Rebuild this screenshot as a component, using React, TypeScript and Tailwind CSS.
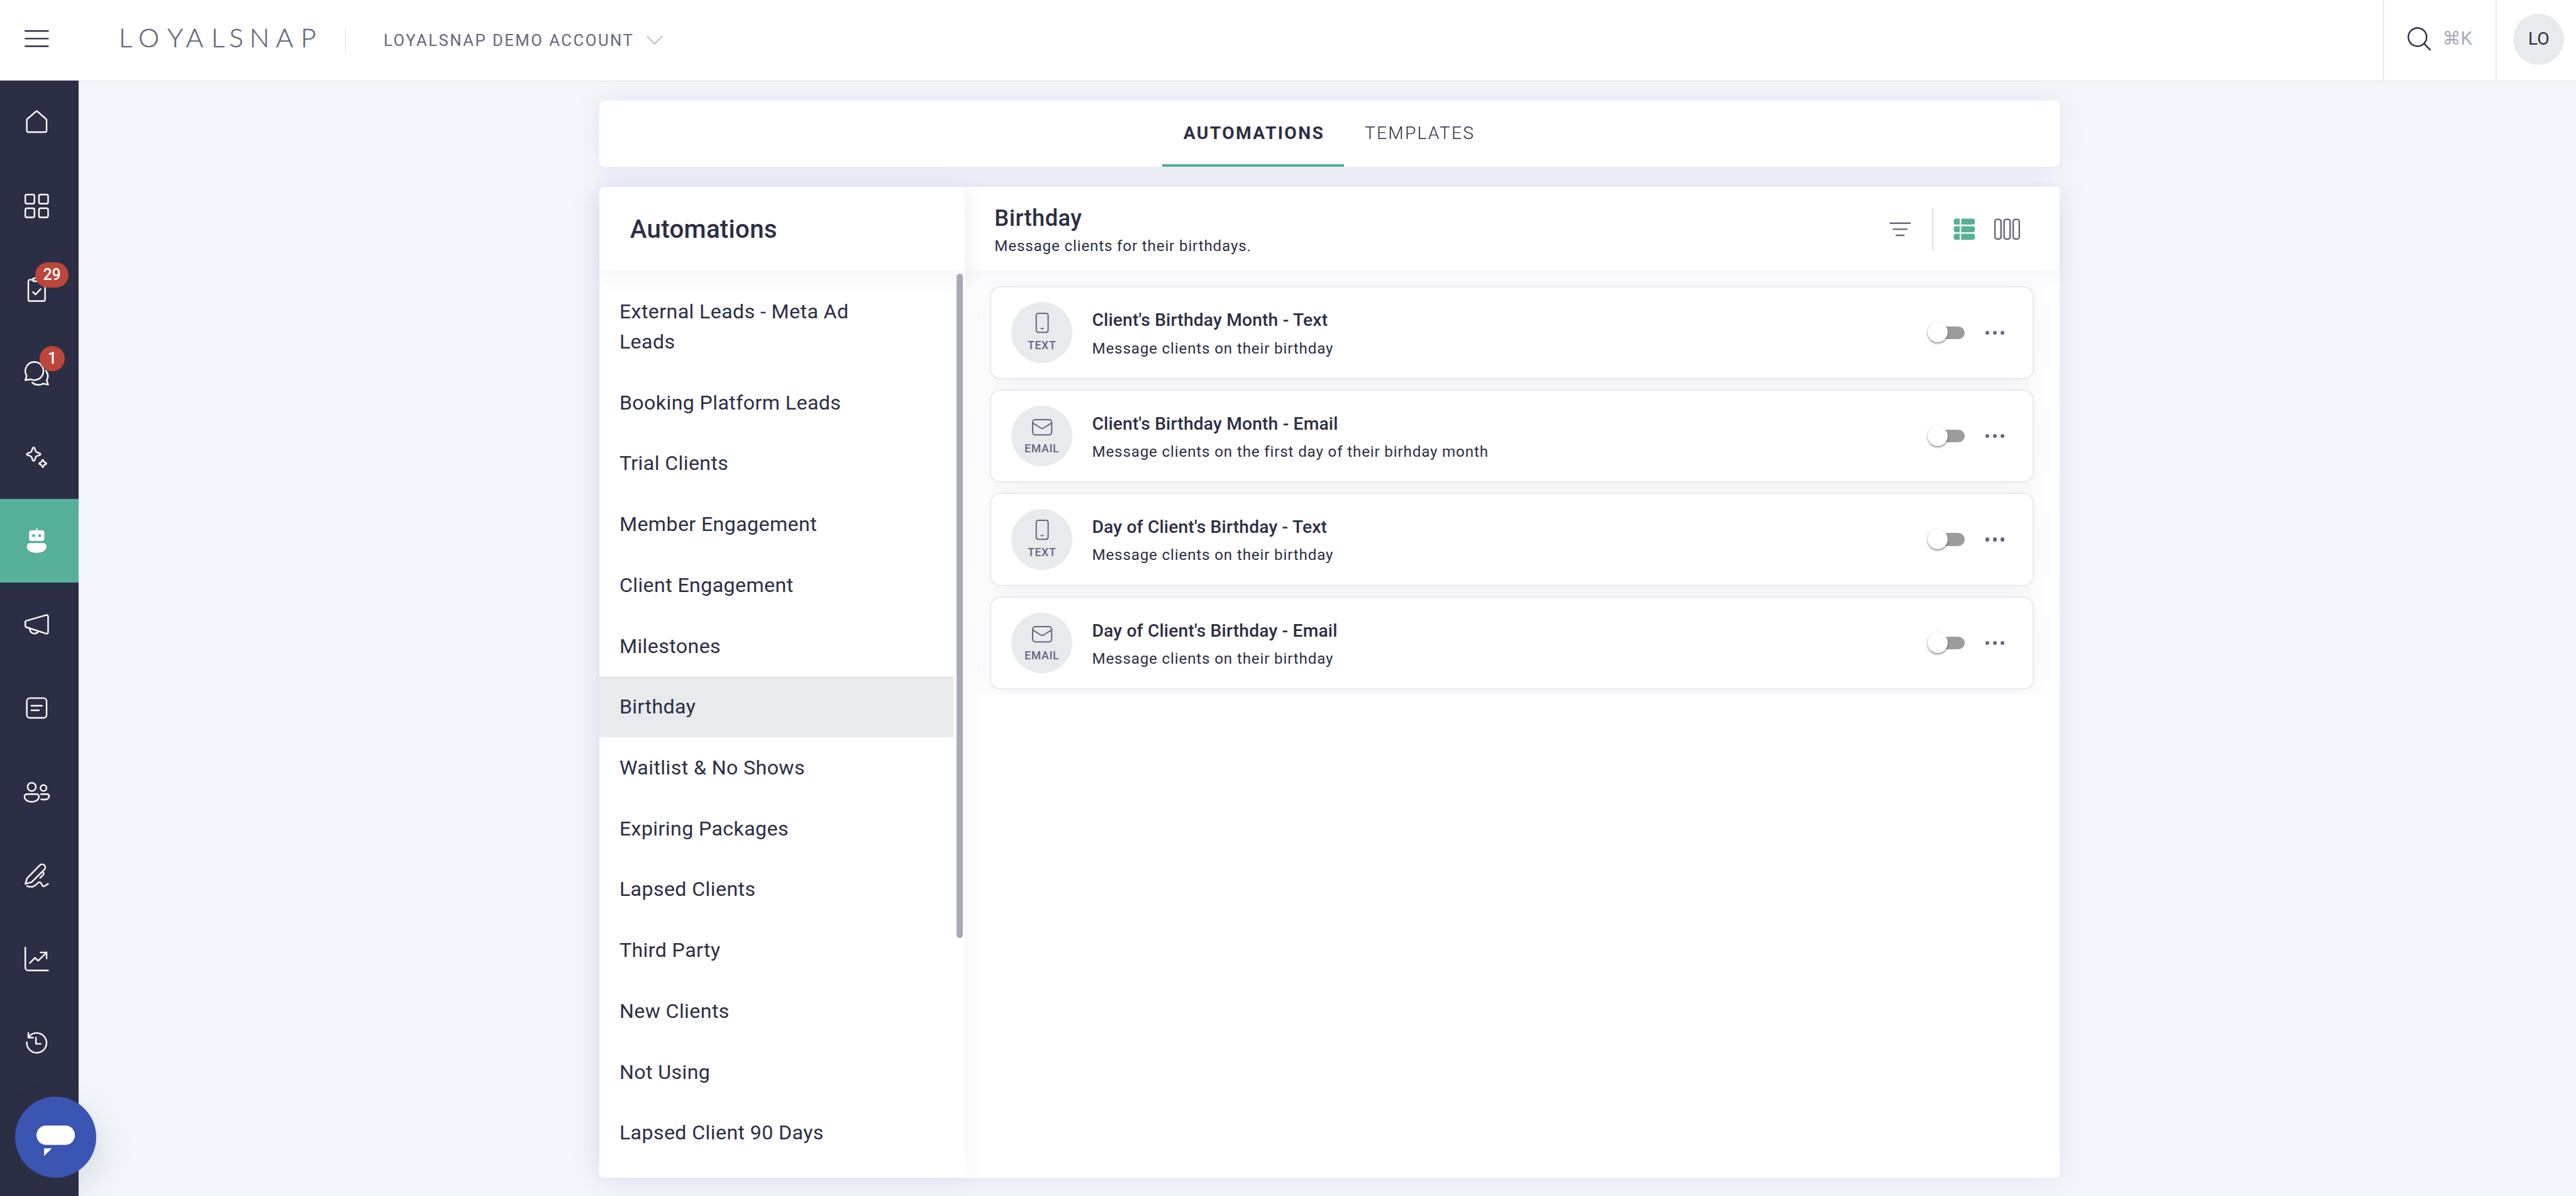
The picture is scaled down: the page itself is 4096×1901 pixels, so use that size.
import type { ReactNode } from "react";

type Channel = "text" | "email";

type NavItem = {
  id: string;
  icon: ReactNode;
  badge?: string;
  active?: boolean;
};

const categories = [
  "External Leads - Meta Ad Leads",
  "Booking Platform Leads",
  "Trial Clients",
  "Member Engagement",
  "Client Engagement",
  "Milestones",
  "Birthday",
  "Waitlist & No Shows",
  "Expiring Packages",
  "Lapsed Clients",
  "Third Party",
  "New Clients",
  "Not Using",
  "Lapsed Client 90 Days",
];

const automations: { title: string; description: string; channel: Channel }[] = [
  {
    title: "Client's Birthday Month - Text",
    description: "Message clients on their birthday",
    channel: "text",
  },
  {
    title: "Client's Birthday Month - Email",
    description: "Message clients on the first day of their birhday month",
    channel: "email",
  },
  {
    title: "Day of Client's Birthday - Text",
    description: "Message clients on their birthday",
    channel: "text",
  },
  {
    title: "Day of Client's Birthday - Email",
    description: "Message clients on their birthday",
    channel: "email",
  },
];

function Icon({ children, className = "size-6" }: { children: ReactNode; className?: string }) {
  return (
    <svg
      viewBox="0 0 24 24"
      fill="none"
      stroke="currentColor"
      strokeWidth={1.5}
      strokeLinecap="round"
      strokeLinejoin="round"
      className={`shrink-0 overflow-visible ${className}`}
    >
      {children}
    </svg>
  );
}

const navItems: NavItem[] = [
  {
    id: "home",
    icon: (
      <path d="M2.25 9.9c0-.5.25-.95.6-1.2l8.1-7.1c.6-.5 1.5-.5 2.1 0l8.1 7.1c.35.25.6.7.6 1.2v10.35a1.5 1.5 0 0 1-1.5 1.5H3.75a1.5 1.5 0 0 1-1.5-1.5Z" />
    ),
  },
  {
    id: "dashboard",
    icon: (
      <>
        <rect x=".75" y=".75" width="9" height="9" rx="1.5" />
        <rect x="14.25" y=".75" width="9" height="9" rx="1.5" />
        <rect x=".75" y="14.25" width="9" height="9" rx="1.5" />
        <rect x="14.25" y="14.25" width="9" height="9" rx="1.5" />
      </>
    ),
  },
  {
    id: "tasks",
    badge: "29",
    icon: (
      <>
        <path d="M8.25 2.25h-3a1.5 1.5 0 0 0-1.5 1.5v18a1.5 1.5 0 0 0 1.5 1.5h13.5a1.5 1.5 0 0 0 1.5-1.5v-18a1.5 1.5 0 0 0-1.5-1.5h-3" />
        <rect x="8.25" y=".75" width="7.5" height="3" rx="1.5" />
        <path d="m8.25 14.4 2.6 2.4 5.1-5.4" />
      </>
    ),
  },
  {
    id: "inbox",
    badge: "1",
    icon: (
      <>
        <path d="M9.75.75a9 9 0 0 0-7.6 13.8L.75 18.8l5.2-.85A9 9 0 1 0 9.75.75Z" />
        <path d="M7.5 21.1a9.2 9.2 0 0 0 10.8 1.1l4.95 1-1.35-4.1a9 9 0 0 0-.8-9.6" />
      </>
    ),
  },
  {
    id: "assistant",
    icon: (
      <>
        <path d="M9 2.6c.45 0 .85.3 1 .8l.75 2.3a3 3 0 0 0 1.8 1.85l2.5.85c1 .35 1 1.35 0 1.7l-2.5.85a3 3 0 0 0-1.8 1.85L10 15.1c-.35 1-1.65 1-2 0l-.75-2.3a3 3 0 0 0-1.8-1.85l-2.5-.85c-1-.35-1-1.35 0-1.7l2.5-.85A3 3 0 0 0 7.25 5.7L8 3.4c.15-.5.55-.8 1-.8Z" />
        <path d="M18 14.9c.3 0 .55.2.65.5l.35.9a1.5 1.5 0 0 0 1 1l.9.4c.85.3.85 1.2 0 1.5l-.9.35a1.5 1.5 0 0 0-1 1l-.35.9c-.25.7-1.05.7-1.3 0l-.35-.9a1.5 1.5 0 0 0-1-1l-.9-.35c-.85-.3-.85-1.2 0-1.5l.9-.4a1.5 1.5 0 0 0 1-1l.35-.9c.1-.3.35-.5.65-.5Z" />
      </>
    ),
  },
  {
    id: "automations",
    active: true,
    icon: (
      <g fill="currentColor" stroke="none">
        <path
          fillRule="evenodd"
          d="M11 1.8V1a1 1 0 0 1 2 0v.8h4.25a2.25 2.25 0 0 1 2.25 2.25v6a2.25 2.25 0 0 1-2.25 2.25H6.75a2.25 2.25 0 0 1-2.25-2.25v-6A2.25 2.25 0 0 1 6.75 1.8ZM9 5.6a1.5 1.5 0 1 0 0 3 1.5 1.5 0 0 0 0-3Zm6 0a1.5 1.5 0 1 0 0 3 1.5 1.5 0 0 0 0-3Z"
        />
        <path d="M5.4 14.5h13.2a3.15 3.15 0 0 1 3.15 3.15C21.75 21.8 17.3 24 12 24s-9.75-2.2-9.75-6.35A3.15 3.15 0 0 1 5.4 14.5Z" />
      </g>
    ),
  },
  {
    id: "campaigns",
    icon: (
      <>
        <path d="M.75 9.9a1.5 1.5 0 0 1 1.15-1.45l19.5-5.55a1.45 1.45 0 0 1 1.85 1.4v15.5a1.45 1.45 0 0 1-1.85 1.4L1.9 14.9a1.5 1.5 0 0 1-1.15-1.45Z" />
        <path d="M5.25 16.1v1.15a4.6 4.6 0 0 0 8.3 1.9" />
      </>
    ),
  },
  {
    id: "forms",
    icon: (
      <>
        <rect x="2.25" y="2.25" width="19.5" height="19.5" rx="3" />
        <path d="M6.75 9.75h10.5M6.75 14.25h7.5" />
      </>
    ),
  },
  {
    id: "contacts",
    icon: (
      <>
        <circle cx="7.1" cy="7.3" r="4.1" />
        <path d="M2.3 14.4h9.6a2.35 2.35 0 0 1 2.35 2.35c0 3.3-3.15 5.25-7.15 5.25S-.05 20.05-.05 16.75A2.35 2.35 0 0 1 2.3 14.4Z" />
        <circle cx="18.7" cy="8.4" r="3" />
        <path d="M16.2 14.4h5.8a2.3 2.3 0 0 1 2.3 2.1c0 2.15-2.3 3.4-5.3 3.4-.9 0-1.8-.1-2.6-.4" />
      </>
    ),
  },
  {
    id: "waivers",
    icon: (
      <>
        <path d="M.75 20.4 2.7 14.6 15.2 2a3.05 3.05 0 0 1 4.4 4.3L7 18.7Z" />
        <path d="m17.7 8.3.7.7a1.8 1.8 0 0 1 0 2.55l-3 3" />
        <path d="M2.4 22.5c5.6 2.3 8.4-.6 10.2-2.4 1.5-1.5 2.6-2 3.6-.6 1 1.5 1.3 4.4 4.05 2.8l3-2" />
      </>
    ),
  },
  {
    id: "reports",
    icon: (
      <>
        <path d="M.75.75v19.5a3 3 0 0 0 3 3h19.5" />
        <path d="m5.25 15.9 5.1-5.1 3 3 8.4-8.3" />
        <path d="M15.75 5.5h6v6" />
      </>
    ),
  },
  {
    id: "history",
    icon: (
      <>
        <path d="M2.25 11.4a9.75 9.75 0 1 0 2.9-6.2L3.9 6.6" />
        <path d="M3.75 2.25V7h4.8" />
        <path d="M11.25 7v6.1H16" />
      </>
    ),
  },
];

function Header() {
  return (
    <header className="flex h-[79.5px] items-center bg-white">
      <Icon className="mb-1 ml-[24.5px] size-6">
        <path d="M.75 4.5h22.5M.75 12h22.5M.75 19.5h22.5" />
      </Icon>
      <svg
        viewBox="0 0 196 80"
        className="ml-[68.5px] h-20 w-[196px] fill-[#65677b] stroke-[#65677b] font-['Lato',sans-serif] text-[26px] font-light"
        strokeWidth={0.3}
      >
        <text x="0 19.3 48 66.3 91.2 108.8 128.9 155 179.5" y="46.7">
          LOYALSNAP
        </text>
      </svg>
      <span className="ml-[27.5px] h-[25px] w-px bg-[#dfdfe3]" />
      <button className="ml-[37px] flex items-center text-base tracking-[1.5px] text-[#65677b]">
        LOYALSNAP DEMO ACCOUNT
        <Icon className="ml-[12px] size-4 text-[#a8aabb]">
          <path d="m1 6.5 11 11 11-11" />
        </Icon>
      </button>

      <div className="ml-auto flex h-full w-[111px] items-center border-l-[1.25px] border-[#e7ebee] pl-[22.5px] text-[#2c2e45]">
        <Icon className="mb-1 size-6">
          <circle cx="10.5" cy="10.5" r="9" />
          <path d="m17 17 6 6" />
        </Icon>
        <span className="ml-[11px] flex items-center pb-1 text-lg leading-6 text-[#a8aabb]">
          <span className="font-['DejaVu_Sans',sans-serif]">⌘</span>K
        </span>
      </div>
      <div className="flex h-full w-[79.5px] items-center border-l-[1.25px] border-[#e7ebee] pb-[2px] pl-[16.5px]">
        <div className="flex size-[50px] items-center justify-center rounded-full bg-[#e7ebee] text-[17.5px] text-[#2c2e45]">
          LO
        </div>
      </div>
    </header>
  );
}

function Sidebar() {
  return (
    <nav className="w-[77.5px] shrink-0 bg-[#2c2e45] text-white">
      {navItems.map((item) => (
        <a
          key={item.id}
          className={`relative flex h-[82.5px] items-center pl-[24.5px] ${item.active ? "bg-[#57b099]" : ""}`}
        >
          <Icon>{item.icon}</Icon>
          {item.badge && (
            <span
              className={`absolute top-[14px] flex h-[25px] items-center justify-center rounded-full bg-[#bc4639] text-[15.5px] font-medium ${
                item.badge.length > 1 ? "left-[35px] w-[32.5px]" : "left-[39px] w-[25px]"
              }`}
            >
              {item.badge}
            </span>
          )}
        </a>
      ))}
    </nav>
  );
}

function Tabs() {
  return (
    <div className="flex h-[65px] justify-center rounded-[5px] bg-white pr-[1.5px] text-[17.5px] text-[#2c2e45] shadow-[0_0_25px_rgba(80,90,150,0.1)]">
      <a className="flex w-[179.5px] items-center justify-center border-b-[2.5px] border-[#57b099] pt-[1.5px] pl-[1.4px] font-bold tracking-[1.46px]">
        AUTOMATIONS
      </a>
      <a className="flex w-[149px] items-center justify-center border-b-[2.5px] border-transparent pt-[1.5px] font-light tracking-[1.36px]">
        TEMPLATES
      </a>
    </div>
  );
}

function CategoryList() {
  return (
    <aside className="relative z-10 flex w-[360px] shrink-0 flex-col rounded-[5px] bg-white shadow-[0_0_25px_rgba(80,90,160,0.07)]">
      <h2 className="flex h-[82.5px] shrink-0 items-center rounded-[5px] pt-[2px] pl-[30px] text-[25px] font-medium tracking-[0.15px] shadow-[0_8px_20px_rgba(80,80,140,0.05)]">
        Automations
      </h2>
      <div className="flex flex-1 overflow-hidden">
        <ul className="w-[349px] pt-[10px]">
          {categories.map((name) => (
            <li
              key={name}
              className={`py-[15px] pr-[80px] pl-[19.5px] text-xl leading-[30px] tracking-[0.22px] ${
                name === "Birthday" ? "bg-[#e7ebee]" : ""
              }`}
            >
              {name}
            </li>
          ))}
        </ul>
        <div className="mt-[3px] ml-[3px] h-[655px] w-[6px] rounded-full bg-[#a8aabb]" />
      </div>
    </aside>
  );
}

function ChannelBadge({ channel }: { channel: Channel }) {
  return (
    <div className="flex size-[60px] shrink-0 flex-col items-center rounded-full bg-[#e7ebee] pt-[10.5px] text-[#65677b]">
      <Icon className="size-5">
        {channel === "text" ? (
          <>
            <rect x="4.95" y=".75" width="14.1" height="22.5" rx="2.5" />
            <path d="M10.8 18.75h2.4" />
          </>
        ) : (
          <>
            <rect x=".75" y="3.7" width="22.5" height="18" rx="3" />
            <path d="m1.4 8.1 8.9 5.5c1.05.65 2.35.65 3.4 0l8.9-5.5" />
          </>
        )}
      </Icon>
      <span className="mt-[5.8px] text-[11px] leading-[13px] font-medium tracking-[0.4px]">
        {channel === "text" ? "TEXT" : "EMAIL"}
      </span>
    </div>
  );
}

function Toggle() {
  return (
    <div className="relative ml-[5px] h-[12.5px] w-[31.5px] rounded-full bg-[#9c9c9c]">
      <span className="absolute -top-[4px] -left-[5px] size-5 rounded-full bg-white shadow-[0_1px_2px_rgba(0,0,0,0.5)]" />
    </div>
  );
}

function AutomationPanel() {
  return (
    <section className="flex flex-1 flex-col">
      <div className="flex h-[82.5px] items-center rounded-[5px] bg-white pl-[29.5px] shadow-[0_8px_20px_rgba(80,80,140,0.05)]">
        <div className="pt-[4.5px]">
          <h1 className="text-[22.5px] leading-[29px] font-medium tracking-[0.28px]">Birthday</h1>
          <p className="text-[15px] leading-[25px] tracking-[0.52px]">Message clients for their birthdays.</p>
        </div>
        <div className="ml-auto flex items-center text-[#65677b]">
          <Icon>
            <path d="M2.25 6h19.5M5.25 12h13.5M8.25 18h7.5" />
          </Icon>
          <span className="ml-[19.5px] h-[42.5px] w-px bg-[#dfdfe3]" />
          <Icon className="ml-[19px] size-6 text-[#57b099]">
            <g fill="currentColor" stroke="none">
              {[1.5, 9, 16.5].map((y) => (
                <g key={y} transform={`translate(1.5 ${y})`}>
                  <path d="M6 0H2.5A2.5 2.5 0 0 0 0 2.5v1A2.5 2.5 0 0 0 2.5 6H6Z" />
                  <path d="M7.5 0h11A2.5 2.5 0 0 1 21 2.5v1A2.5 2.5 0 0 1 18.5 6h-11Z" />
                </g>
              ))}
            </g>
          </Icon>
          <Icon className="mr-[40px] ml-[17.7px] size-6">
            <rect x=".05" y="2.25" width="6" height="19.5" rx="2.25" />
            <rect x="9.05" y="2.25" width="6" height="19.5" rx="2.25" />
            <rect x="18.05" y="2.25" width="6" height="19.5" rx="2.25" />
          </Icon>
        </div>
      </div>

      <div className="mt-[10px] flex flex-col gap-[10px] overflow-hidden px-[25px] py-[5px]">
        {automations.map((a) => (
          <article
            key={a.title}
            className="flex h-[92px] shrink-0 items-center rounded-[10px] border-[1.25px] border-[#e7ebee] bg-white pl-5 shadow-[0_4px_25px_rgba(70,70,130,0.07)]"
          >
            <ChannelBadge channel={a.channel} />
            <div className="ml-[19.5px] pt-[3.5px]">
              <h3 className="text-[17.5px] leading-[28px] font-medium tracking-[0.11px]">{a.title}</h3>
              <p className="text-[15px] leading-[28px] tracking-[0.52px]">{a.description}</p>
            </div>
            <div className="ml-auto flex items-center pr-[28px]">
              <Toggle />
              <div className="ml-[20.5px] flex gap-[3.5px]">
                <span className="size-1 rounded-full bg-[#65677b]" />
                <span className="size-1 rounded-full bg-[#65677b]" />
                <span className="size-1 rounded-full bg-[#65677b]" />
              </div>
            </div>
          </article>
        ))}
      </div>
    </section>
  );
}

export default function App() {
  return (
    <div className="relative flex h-[1179.25px] flex-col overflow-hidden bg-[#f4f6fb] font-['Roboto',sans-serif] text-[#2c2e45] [zoom:1.612]">
      <Header />
      <div className="flex min-h-0 flex-1">
        <Sidebar />
        <main className="flex flex-1 flex-col border-t-[1.25px] border-[#e9ebef] pt-[18.8px] pb-[18.25px] pl-[514px]">
          <div className="flex w-[1440px] flex-1 flex-col gap-5">
            <Tabs />
            <div className="flex min-h-0 flex-1 rounded-[5px] bg-white shadow-[0_0_30px_rgba(80,100,190,0.12)]">
              <CategoryList />
              <AutomationPanel />
            </div>
          </div>
        </main>
      </div>

      <button className="absolute bottom-[18px] left-[15px] flex size-20 items-center justify-center rounded-full bg-[#3a55b2] text-white shadow-[5px_12px_35px_rgba(40,70,60,0.14)]">
        <svg viewBox="0 0 38 30" fill="currentColor" className="mt-[7px] h-[30px] w-[38px]">
          <rect width="38" height="19" rx="9.5" />
          <path d="M7.5 22.5h7.7l-7.7 7.5Z" />
        </svg>
      </button>
    </div>
  );
}
